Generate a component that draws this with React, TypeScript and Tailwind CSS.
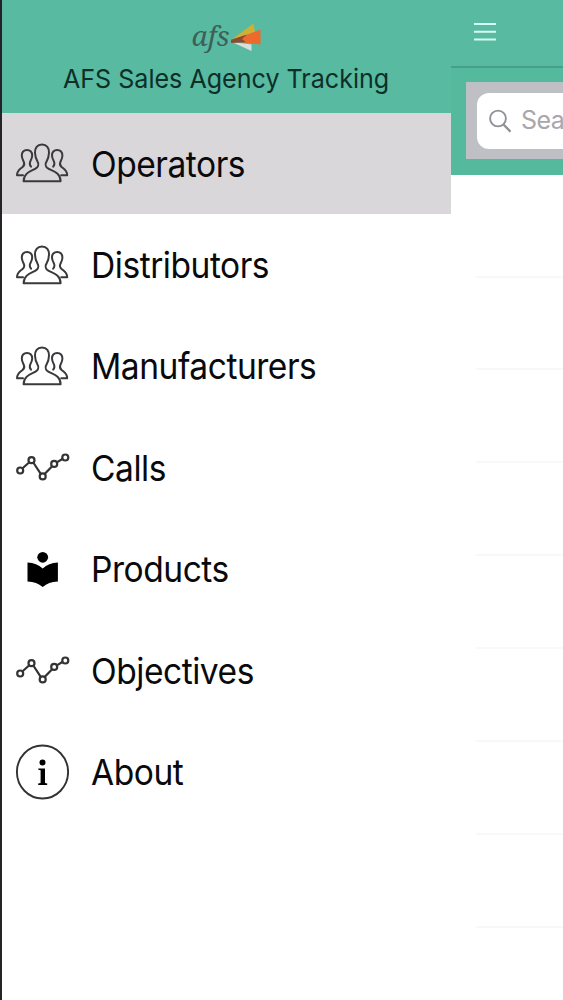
import type { ReactNode } from "react";

const PeopleIcon = () => (
  <svg
    width="54"
    height="40"
    viewBox="0 0 54 40"
    fill="none"
    stroke="#3a3a3c"
    strokeWidth="2"
    strokeLinejoin="round"
    strokeLinecap="round"
  >
    <path d="M27 1.500c-4.800 0-7.200 3.600-7 8.300.2 4.500 1.300 6.800 2.500 8.800 1.200 1.800 1 4.600-.8 6.200C17.900 28.100 8.800 28.600 8.600 38.200h37c-.2-9.600-9.500-10.100-13.500-13.400-1.800-1.600-1.800-4.400-.6-6.200 1.400-2 2.300-4.300 2.500-8.800.2-4.700-2.200-8.300-7-8.300z" />
    <path d="M8 32.200H2c0-4.700 2.800-5.900 5.600-8.200 1.900-1.600 2-3.400 1.200-5.200-1-2-1.900-3.300-2-6.100-.1-3.500 1.900-5.700 5.200-5.700s5.300 2.200 5.200 5.500c-.1 2.700-1.200 4.200-2 6-.8 2-.4 3.700.8 5.200" />
    <path d="M46.200 32.200h6c0-4.700-2.800-5.900-5.600-8.200-1.900-1.600-2-3.400-1.200-5.200 1-2 1.900-3.300 2-6.100.1-3.500-1.900-5.700-5.200-5.700s-5.300 2.200-5.200 5.500c.1 2.700 1.200 4.200 2 6 .8 2 .4 3.700-.8 5.200" />
  </svg>
);

const ChartIcon = () => (
  <svg
    width="56"
    height="40"
    viewBox="0 0 56 40"
    fill="none"
    stroke="#333"
    strokeWidth="2.200"
  >
    <path d="M7.300 21.500l7-6.200M18.300 15.500l7.600 11.600M29.600 27.100l7.800-8.200M41.800 15.400l6-3.600" />
    <circle cx="5.200" cy="23.500" r="3" />
    <circle cx="16.500" cy="13.200" r="3" />
    <circle cx="27.700" cy="29.400" r="3" />
    <circle cx="39.200" cy="16.900" r="3" />
    <circle cx="50.300" cy="10.500" r="3" />
  </svg>
);

const BookIcon = () => (
  <svg width="54" height="40" viewBox="0 0 54 40" fill="#000">
    <circle cx="27.700" cy="8.300" r="5.400" />
    <path d="M12.500 13.600c6.500.3 11 2.200 15.200 5.900 4.200-3.700 8.700-5.600 15.200-5.900v19c-6.500.3-11 2-15.200 5.400-4.200-3.400-8.700-5.100-15.200-5.400z" />
  </svg>
);

const InfoIcon = () => (
  <svg width="54" height="56" viewBox="0 0 54 56">
    <ellipse
      cx="27.500"
      cy="28"
      rx="25.600"
      ry="26.500"
      fill="none"
      stroke="#333"
      strokeWidth="1.900"
    />
    <circle cx="27.500" cy="18.500" r="3" />
    <path d="M23.300 24.500h6.700v14.600l2.200.5v1.300h-9v-1.300l2.400-.5V26.300l-2.300-.5z" />
  </svg>
);

const Logo = () => (
  <div className="flex h-8 w-[70px] items-center">
    <span className="-mt-1.5 w-[38px] font-['Noto_Serif','Liberation_Serif',serif] text-[28px] leading-8 text-[#3d5f57] italic">
      afs
    </span>
    <svg width="32" height="30" viewBox="0 0 32 30">
      <path d="M1 17L23.500.5 25 9z" fill="#cfb035" />
      <path d="M2 19l19.500 2.500V28z" fill="#d9e0dc" />
      <path d="M1 18L30.500 6.500v15z" fill="#ef692b" />
      <path d="M1 16.800l16-5.300-5 4.500 4 3.300-15 .7z" fill="#8b4a31" />
    </svg>
  </div>
);

interface MenuItem {
  label: string;
  icon: ReactNode;
}

const menuItems: MenuItem[] = [
  { label: "Operators", icon: <PeopleIcon /> },
  { label: "Distributors", icon: <PeopleIcon /> },
  { label: "Manufacturers", icon: <PeopleIcon /> },
  { label: "Calls", icon: <ChartIcon /> },
  { label: "Products", icon: <BookIcon /> },
  { label: "Objectives", icon: <ChartIcon /> },
  { label: "About", icon: <InfoIcon /> },
];

const listRows = [1, 2, 3, 4, 5, 6, 7, 8];

export default function App() {
  return (
    <div className="flex h-[1000px] w-[563px] overflow-hidden bg-white font-['Inter','Liberation_Sans',sans-serif]">
      <aside className="flex w-[451px] shrink-0 flex-col border-l-2 border-[#242428]">
        <header className="flex h-[112.5px] flex-col items-center bg-[#57baa1] pt-[22px]">
          <Logo />
          <h1 className="mt-[9px] scale-x-[0.965] text-[26px] leading-8 whitespace-nowrap text-[#0d2f28]">
            AFS Sales Agency Tracking
          </h1>
        </header>
        <nav>
          {menuItems.map((item, i) => (
            <div
              key={item.label}
              className={`flex h-[101.4px] items-center pl-[13px] ${
                i === 0 ? "bg-[#d9d7d9]" : ""
              }`}
            >
              <span className="flex w-[76px] shrink-0 items-center">
                {item.icon}
              </span>
              <span className="mt-[3px] origin-left scale-x-[0.945] text-[35.5px] leading-10 tracking-[-0.5px] text-[#0a0a0c]">
                {item.label}
              </span>
            </div>
          ))}
        </nav>
      </aside>

      <main className="flex w-[112px] shrink-0 flex-col overflow-hidden">
        <div className="h-[68px] shrink-0 border-b-2 border-[#469f8b] bg-[#57baa1] pt-[22px] pl-[23px]">
          <svg width="22" height="20" stroke="#d5fff2" strokeWidth="2">
            <path d="M0 2h22M0 9.700h22M0 17.400h22" />
          </svg>
        </div>
        <div className="h-[107px] shrink-0 bg-[#55b99d] pt-[14px] pl-[15px]">
          <div className="h-[77px] bg-[#bfc0c6] pt-[11px] pl-[11px]">
            <div className="flex h-[56px] w-[200px] items-center rounded-[12px] bg-white pl-3">
              <svg
                width="22"
                height="24"
                fill="none"
                stroke="#929096"
                strokeWidth="1.900"
              >
                <circle cx="9" cy="9.500" r="7.900" />
                <path d="M14.500 15.500l7 7.200" strokeWidth="2.400" />
              </svg>
              <span className="ml-[10px] text-[25px] tracking-[-0.5px] text-[#aaa6ab]">
                Search
              </span>
            </div>
          </div>
        </div>
        <div className="flex-1">
          {listRows.map((row) => (
            <div key={row} className="flex h-[92.9px] pl-[25px] first:h-[102.500px]">
              <div className="flex-1 border-b-2 border-[#f8f8f9]" />
            </div>
          ))}
        </div>
      </main>
    </div>
  );
}
